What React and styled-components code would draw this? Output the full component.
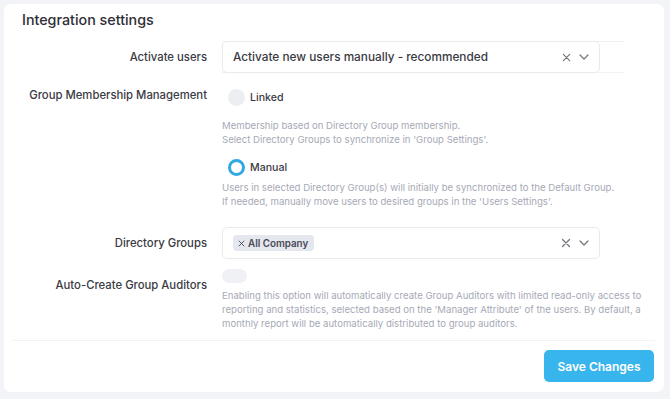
import React from "react";
import styled, { createGlobalStyle } from "styled-components";

const GlobalStyle = createGlobalStyle`
  html, body {
    margin: 0;
    padding: 0;
    background: #f3f4f7;
    font-family: Inter, "Open Sans", sans-serif;
    color: #36363f;
  }
  * {
    box-sizing: border-box;
  }
`;

const Page = styled.div`
  padding: 4px 6px 7px 4px;
`;

const Card = styled.div`
  background: #ffffff;
  border-radius: 7px;
  padding: 6px 9px 10px 9px;
`;

const Title = styled.h2`
  margin: 0 0 11px 9px;
  font-size: 14.3px;
  line-height: 20px;
  font-weight: 500;
  color: #2e2e36;
`;

const Form = styled.div`
  display: flex;
  flex-direction: column;
  padding-left: 9px;
`;

const Row = styled.div`
  display: grid;
  grid-template-columns: 185px 1fr;
  column-gap: 15px;
  margin-top: ${(p) => p.$top || 0}px;
  align-items: ${(p) => (p.$center ? "center" : "start")};
`;

const Label = styled.div`
  text-align: right;
  white-space: nowrap;
  font-size: 11.3px;
  line-height: 16px;
  font-weight: 500;
  color: #3b3b44;
  padding-top: ${(p) => p.$pad || 0}px;
`;

const Field = styled.div`
  display: flex;
  flex-direction: column;
  align-items: flex-start;
`;

const SelectWrap = styled.div`
  width: 402px;
  border-top: 1px solid #f1f2f5;
  border-bottom: 1px solid #f1f2f5;
`;

const Select = styled.div`
  width: 378px;
  height: 32px;
  margin: -1px 0;
  border: 1px solid #e9eaee;
  border-radius: 5px;
  display: flex;
  align-items: center;
  padding: 0 10px 0 10px;
  background: #fff;
`;

const SelectValue = styled.div`
  flex: 1;
  font-size: 11.8px;
  font-weight: 500;
  color: #3a3a43;
`;

const Indicators = styled.div`
  display: flex;
  align-items: center;
  gap: 8px;
  color: #74747c;
`;

const Tag = styled.span`
  display: inline-flex;
  align-items: center;
  gap: 3px;
  height: 16px;
  padding: 0 6px 0 5px;
  background: #e5e7ef;
  border-radius: 4px;
  font-size: 9.8px;
  font-weight: 600;
  color: #4a4a55;
`;

const Option = styled.label`
  display: flex;
  align-items: center;
  gap: 5px;
  height: 17px;
  margin-top: ${(p) => p.$top || 0}px;
  margin-left: 6px;
  font-size: 10.6px;
  font-weight: 500;
  color: #3b3b44;
`;

const Radio = styled.span`
  width: 17px;
  height: 17px;
  border-radius: 50%;
  background: ${(p) => (p.$checked ? "#fff" : "#eceef2")};
  border: ${(p) => (p.$checked ? "3.5px solid #2fa8e4" : "none")};
`;

const Help = styled.p`
  margin: ${(p) => p.$top || 0}px 0 0 0;
  font-size: 9.6px;
  line-height: 14px;
  color: #a6a9b6;
  max-width: 432px;
`;

const Toggle = styled.span`
  display: block;
  width: 25px;
  height: 14px;
  border-radius: 7px;
  background: #f0f1f4;
`;

const Footer = styled.div`
  margin-top: 9px;
  border-top: 1px solid #f1f2f5;
  padding-top: 9px;
  display: flex;
  justify-content: flex-end;
`;

const SaveButton = styled.button`
  width: 110px;
  height: 32px;
  margin-right: 1px;
  border: none;
  border-radius: 5px;
  background: #38b5ec;
  color: #fff;
  font-family: Inter, "Open Sans", sans-serif;
  font-size: 12px;
  font-weight: 600;
  cursor: pointer;
`;

const ClearIcon = ({ size = 9 }) => (
  <svg width={size} height={size} viewBox="0 0 10 10" fill="none">
    <path d="M1.5 1.5L8.5 8.5M8.5 1.5L1.5 8.5" stroke="currentColor" strokeWidth="1.3" strokeLinecap="round" />
  </svg>
);

const ChevronIcon = () => (
  <svg width="10" height="6" viewBox="0 0 10 6" fill="none">
    <path d="M1 1L5 5L9 1" stroke="currentColor" strokeWidth="1.2" strokeLinecap="round" strokeLinejoin="round" />
  </svg>
);

const App = () => {
  return (
    <Page>
      <GlobalStyle />
      <Card>
        <Title>Integration settings</Title>
        <Form>
          <Row $center>
            <Label>Activate users</Label>
            <Field>
              <SelectWrap>
                <Select>
                  <SelectValue>Activate new users manually - recommended</SelectValue>
                  <Indicators>
                    <ClearIcon />
                    <ChevronIcon />
                  </Indicators>
                </Select>
              </SelectWrap>
            </Field>
          </Row>

          <Row $top={14}>
            <Label>Group Membership Management</Label>
            <Field>
              <Option $top={2}>
                <Radio />
                Linked
              </Option>
              <Help $top={13}>
                Membership based on Directory Group membership.
                <br />
                Select Directory Groups to synchronize in 'Group Settings'.
              </Help>
              <Option $top={12}>
                <Radio $checked />
                Manual
              </Option>
              <Help $top={5}>
                Users in selected Directory Group(s) will initially be synchronized to the Default Group.
                <br />
                If needed, manually move users to desired groups in the 'Users Settings'.
              </Help>
            </Field>
          </Row>

          <Row $center $top={19}>
            <Label>Directory Groups</Label>
            <Field>
              <Select>
                <SelectValue>
                  <Tag>
                    <ClearIcon size={7} />
                    All Company
                  </Tag>
                </SelectValue>
                <Indicators>
                  <ClearIcon size={10} />
                  <ChevronIcon />
                </Indicators>
              </Select>
            </Field>
          </Row>

          <Row $top={11}>
            <Label $pad={8}>Auto-Create Group Auditors</Label>
            <Field>
              <Toggle />
              <Help $top={6}>
                Enabling this option will automatically create Group Auditors with limited read-only access to
                reporting and statistics, selected based on the 'Manager Attribute' of the users. By default, a
                monthly report will be automatically distributed to group auditors.
              </Help>
            </Field>
          </Row>
        </Form>
        <Footer>
          <SaveButton>Save Changes</SaveButton>
        </Footer>
      </Card>
    </Page>
  );
};

export default App;
